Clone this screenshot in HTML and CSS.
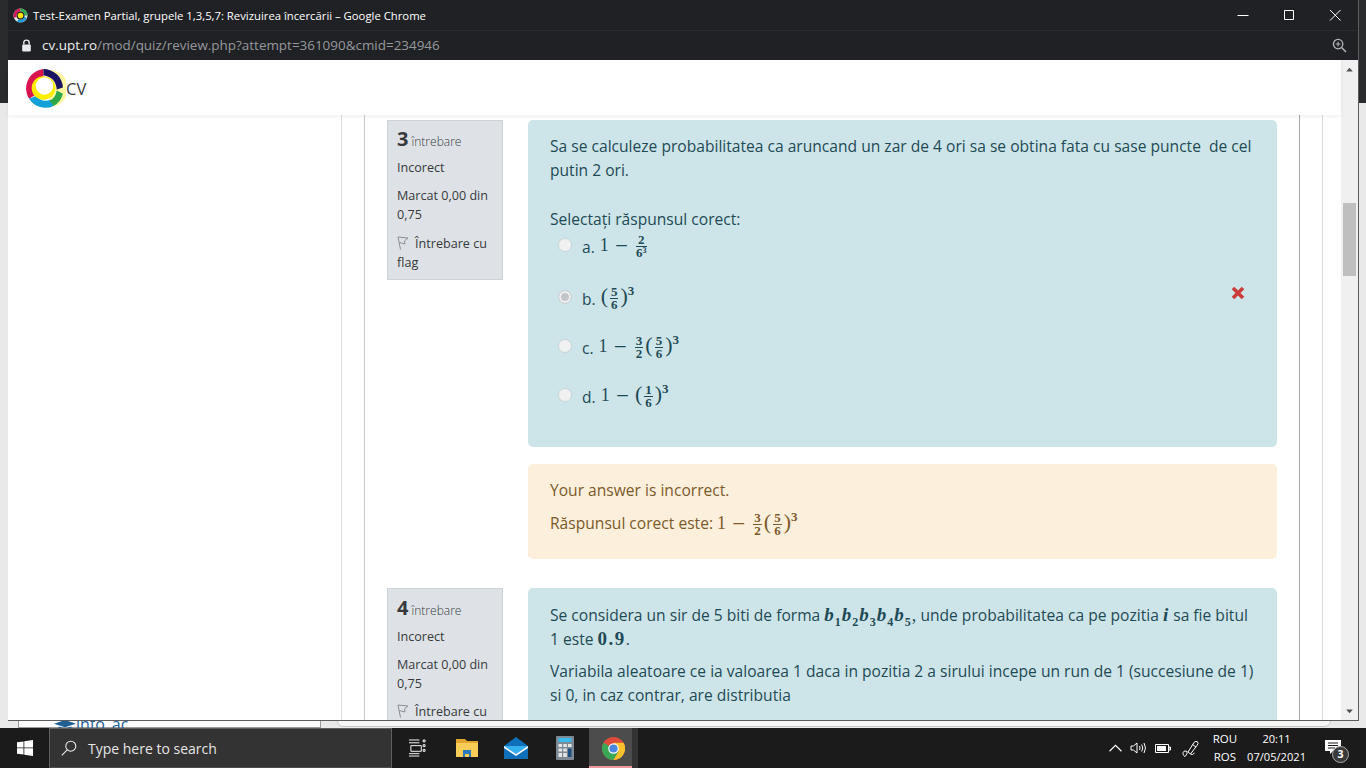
FILE: index.html
```html
<!DOCTYPE html>
<html lang="ro">
<head>
  <meta charset="UTF-8">
  <title>Test-Examen Partial, grupele 1,3,5,7: Revizuirea încercării</title>
  <link rel="stylesheet" href="styles.css">
</head>
<body>
  <div class="desktop">
    <!-- window behind the popup, only its edges show -->
    <div class="back-window">
      <div class="back-top"></div>
      <div class="back-bottom"></div>
      <div class="back-panel"><span class="back-link"><svg class="cap" viewBox="0 0 24 12"><path d="M0 4 12 0l12 4-12 4z" fill="#1f5f94"/><path d="M5 7v3q7 3 14 0V7l-7 2.400z" fill="#1f5f94"/></svg>info_ac</span></div>
      <div class="back-main"></div>
    </div>

    <div class="popup">
      <div class="titlebar">
        <svg class="favicon" viewBox="0 0 16 16"><circle cx="8" cy="8" r="6" fill="none" stroke="#e8e8e8" stroke-width="3"/><path d="M8 2a6 6 0 0 0-5.500 8" fill="none" stroke="#d4145a" stroke-width="3"/><path d="M13.500 10A6 6 0 0 1 5 13.200" fill="none" stroke="#1c9ad6" stroke-width="3"/><path d="M8 2a6 6 0 0 1 6 6" fill="none" stroke="#2fa84f" stroke-width="3"/><circle cx="8" cy="8" r="3" fill="#ffe600"/></svg>
        <span class="wintitle">Test-Examen Partial, grupele 1,3,5,7: Revizuirea încercării – Google Chrome</span>
        <div class="winbtns">
          <svg viewBox="0 0 46 30"><path d="M17.500 15.500h11" stroke="#fff" fill="none"/></svg>
          <svg viewBox="0 0 46 30"><path d="M18.500 10.500h9v9h-9z" stroke="#fff" fill="none"/></svg>
          <svg viewBox="0 0 46 30"><path d="M18 10l10.500 10.500M28.500 10 18 20.500" stroke="#fff" fill="none"/></svg>
        </div>
      </div>
      <div class="urlbar">
        <svg class="lock" viewBox="0 0 10 12"><path d="M2.500 5V3.500a2.500 2.500 0 0 1 5 0V5" fill="none" stroke="#e8eaed" stroke-width="1.300"/><rect x="1" y="5" width="8" height="6.500" rx="1" fill="#e8eaed"/></svg>
        <span class="url"><b>cv.upt.ro</b>/mod/quiz/review.php?attempt=361090&amp;cmid=234946</span>
        <svg class="zoom-ico" viewBox="0 0 16 16"><circle cx="6.500" cy="6.500" r="5" fill="none" stroke="#b4b6b9" stroke-width="1.400"/><path d="M10.200 10.200 15 15" stroke="#b4b6b9" stroke-width="1.600"/><path d="M4 6.500h5M6.500 4v5" stroke="#b4b6b9" stroke-width="1.100"/></svg>
      </div>

      <div class="viewport">
        <div class="page">
          <header class="navbar">
            <svg class="logo" viewBox="0 0 40 40">
              <path d="M24 2a18 18 0 0 1 0 36z" fill="#fff6a0"/>
              <path d="M18 1A19 19 0 0 0 4 30l8-5Q5 12 18 8z" fill="#d9144f"/>
              <path d="M4 30a19 19 0 0 0 24 7l-3-6q-9 3-14-4z" fill="#12a0d8"/>
              <path d="M28 37a19 19 0 0 0 9-12l-6-3q-1 7-7 10z" fill="#2ea84a"/>
              <path d="M18 1a19 19 0 0 1 19 18l-6 2Q30 9 18 7z" fill="#1b1464"/>
              <circle cx="18" cy="19.500" r="11.500" fill="#ffed00"/>
              <circle cx="19" cy="17.500" r="8.500" fill="#fff"/>
            </svg>
            <span class="brand">CV</span>
          </header>

          <div class="columns">
            <aside class="left-col"></aside>
            <main class="main-col">
              <section class="que">
                <div class="que-info">
                  <h3 class="que-no"><span class="num">3</span> întrebare</h3>
                  <div class="state">Incorect</div>
                  <div class="grade">Marcat 0,00 din 0,75</div>
                  <div class="flag"><svg class="flag-ico" viewBox="0 0 12 14"><path d="M1 1 11 2 7.500 5 8 8 2.400 6.500M1 1 3.500 13.500" fill="none" stroke="#8a8f94"/></svg>Întrebare cu flag</div>
                </div>
                <div class="que-body">
                  <div class="formulation q3">
                    <p class="qtext">Sa se calculeze probabilitatea ca aruncand un zar de 4 ori sa se obtina fata cu sase puncte&nbsp; de cel putin 2 ori.</p>
                    <p class="prompt">Selectați răspunsul corect:</p>
                    <div class="answers">
                      <div class="answer"><span class="radio"></span><span class="lbl">a.</span>
                        <span class="m">1 <i class="minus">−</i> <span class="frac"><span>2</span><span>6<sup>3</sup></span></span></span></div>
                      <div class="answer"><span class="radio checked"></span><span class="lbl">b.</span>
                        <span class="m"><i class="par">(</i><span class="frac"><span>5</span><span>6</span></span><i class="par">)</i><sup>3</sup></span>
                        <svg class="cross" viewBox="0 0 14 14"><path d="M2 2l10 10M12 2 2 12" stroke="#ca3c3c" stroke-width="3.600"/></svg></div>
                      <div class="answer"><span class="radio"></span><span class="lbl">c.</span>
                        <span class="m">1 <i class="minus">−</i> <span class="frac"><span>3</span><span>2</span></span><i class="par">(</i><span class="frac"><span>5</span><span>6</span></span><i class="par">)</i><sup>3</sup></span></div>
                      <div class="answer"><span class="radio"></span><span class="lbl">d.</span>
                        <span class="m">1 <i class="minus">−</i> <i class="par">(</i><span class="frac"><span>1</span><span>6</span></span><i class="par">)</i><sup>3</sup></span></div>
                    </div>
                  </div>
                  <div class="outcome">
                    <p>Your answer is incorrect.</p>
                    <p>Răspunsul corect este: <span class="m">1 <i class="minus">−</i> <span class="frac"><span>3</span><span>2</span></span><i class="par">(</i><span class="frac"><span>5</span><span>6</span></span><i class="par">)</i><sup>3</sup></span></p>
                  </div>
                </div>
              </section>

              <section class="que que-next">
                <div class="que-info">
                  <h3 class="que-no"><span class="num">4</span> întrebare</h3>
                  <div class="state">Incorect</div>
                  <div class="grade">Marcat 0,00 din 0,75</div>
                  <div class="flag"><svg class="flag-ico" viewBox="0 0 12 14"><path d="M1 1 11 2 7.500 5 8 8 2.400 6.500M1 1 3.500 13.500" fill="none" stroke="#8a8f94"/></svg>Întrebare cu flag</div>
                </div>
                <div class="que-body">
                  <div class="formulation">
                    <p class="qtext">Se considera un sir de 5 biti de forma <span class="m"><em>b</em><sub>1</sub><em>b</em><sub>2</sub><em>b</em><sub>3</sub><em>b</em><sub>4</sub><em>b</em><sub>5</sub>,</span> unde probabilitatea ca pe pozitia <span class="m"><em>i</em></span> sa fie bitul 1 este <span class="m num-lit">0.9</span>.</p>
                    <p class="qtext">Variabila aleatoare ce ia valoarea 1 daca in pozitia 2 a sirului incepe un run de 1 (succesiune de 1) si 0, in caz contrar, are distributia</p>
                  </div>
                </div>
              </section>
            </main>
            <div class="right-col"></div>
          </div>
        </div>
        <div class="scrollbar">
          <svg class="arrow" viewBox="0 0 10 6"><path d="M1 5.500 5 1l4 4.500z" fill="#505050"/></svg>
          <div class="track"><div class="thumb"></div></div>
          <svg class="arrow" viewBox="0 0 10 6"><path d="M1 .5 5 5 9 .5z" fill="#505050"/></svg>
        </div>
      </div>
    </div>
  </div>

  <footer class="taskbar">
    <svg class="start" viewBox="0 0 16 16"><path d="M0 2.300 6.500 1.400v6.100H0zM7.300 1.300 16 0v7.500H7.300zM0 8.300h6.500v6.300L0 13.700zM7.300 8.300H16V16l-8.700-1.200z" fill="#fff"/></svg>
    <div class="search">
      <svg class="search-ico" viewBox="0 0 16 16"><circle cx="9.800" cy="6.200" r="5" fill="none" stroke="#e8e8e8" stroke-width="1.100"/><path d="M6.200 9.800.8 15.400" stroke="#e8e8e8" stroke-width="1.100"/></svg>
      <span>Type here to search</span>
    </div>
    <div class="task-icons">
      <div class="task"><svg class="tv" viewBox="0 0 18 18"><path d="M0 .5h11M0 3.500h11M2 6.500h11v6H2zM0 15h11M0 17.500h11M15 .5h2v2h-2zM15 5.500h2v2h-2zM15 10.500h2v2h-2z" fill="none" stroke="#fff"/></svg></div>
      <div class="task"><svg class="ti" viewBox="0 0 24 24"><path d="M1 3h9l2 2h11v16H1z" fill="#e2a52d"/><path d="M1 7h22v14H1z" fill="#f7cd58"/><path d="M8 21v-7h8v7h-2v-3h-4v3z" fill="#2b79b9"/></svg></div>
      <div class="task"><svg class="ti" viewBox="0 0 24 24"><path d="M12 1 24 10v13H0V10z" fill="#0f6fb8"/><path d="M0 10h24L12 18z" fill="#35b0ef"/><path d="M0 10l12 8 12-8v2L12 20 0 12z" fill="#fff"/></svg></div>
      <div class="task"><svg class="ti" viewBox="0 0 24 24"><rect x="3" y="0" width="18" height="24" rx="1" fill="#7d8a94"/><rect x="5.500" y="2" width="13" height="4" fill="#3bb9ea"/><path d="M5.500 8h3.500v3H5.500zM10.300 8h3.500v3h-3.500zM15 8h3.500v3H15zM5.500 12.500h3.500v3H5.500zM10.300 12.500h3.500v3h-3.500zM5.500 17h3.500v4H5.500zM10.300 17h3.500v4h-3.500z" fill="#e6e6e6"/><path d="M15 12.500h3.500v8.500H15z" fill="#1c4f80"/></svg></div>
      <div class="task active"><svg class="ti chrome" viewBox="0 0 24 24"><circle cx="12" cy="12" r="12" fill="#dd4b3a"/><path d="M12 12 1.600 6A12 12 0 0 0 12 24l5.200-9z" fill="#3aa757"/><path d="M12 6h10.500A12 12 0 0 1 12 24l5.200-9z" fill="#fbc02d"/><circle cx="12" cy="12" r="5.500" fill="#fff"/><circle cx="12" cy="12" r="4.300" fill="#4a86e0"/></svg></div>
    </div>
    <div class="tray">
      <svg class="tray-ico up" viewBox="0 0 12 7"><path d="M.5 6.500 6 1l5.500 5.500" fill="none" stroke="#fff"/></svg>
      <svg class="tray-ico vol" viewBox="0 0 17 14"><path d="M1 5h2.500L7 2v10L3.500 9H1zM9.500 5q1.200 2 0 4M11.700 3.500q2.200 3.500 0 7M14 2q3 5 0 10" fill="none" stroke="#fff"/></svg>
      <svg class="tray-ico bat" viewBox="0 0 16 9"><path d="M.5 .5h13v8H.5zM14 3h1.500v3H14z" fill="none" stroke="#fff"/><path d="M2 2h9v5H2z" fill="#fff"/></svg>
      <svg class="tray-ico pen" viewBox="0 0 17 17"><path d="M6 12 12 2.500Q14 .5 15.500 1.800T15 5.500L8.500 14zM10.500 4.500l3.500 2.500M1.500 15.500Q0 11.500 3 11t2 2.500-3 3M8.500 14q2 1.500 4-1" fill="none" stroke="#fff"/></svg>
      <div class="lang"><span>ROU</span><span>ROS</span></div>
      <div class="clock"><span>20:11</span><span>07/05/2021</span></div>
      <div class="notif">
        <svg viewBox="0 0 16 15"><path d="M0 0h16v11H8l-3 3v-3H0z" fill="#fff"/><path d="M3 3h10M3 5.500h10M3 8h7" stroke="#1b1b1b"/></svg>
        <span class="notif-count">3</span>
      </div>
    </div>
  </footer>
</body>
</html>
```

FILE: styles.css
```css
* {
  box-sizing: border-box;
}
html, body {
  margin: 0;
  height: 100%;
  overflow: hidden;
}
body {
  width: 1366px;
  height: 768px;
  font-family: "Open Sans", sans-serif;
  background: #1b1b1b;
}
svg {
  display: block;
  flex: none;
}

/* desktop and its windows */
.desktop {
  position: relative;
  height: 728px;
  overflow: hidden;
  background: #e9e9e9;
}
.back-window {
  position: absolute;
  inset: 0;
}
.back-top {
  height: 103px;
  background: #2a2b2d;
}
.back-bottom {
  height: 625px;
  background: #e9e9e9;
}
.back-panel {
  position: absolute;
  left: 18px;
  top: 600px;
  width: 303px;
  height: 128px;
  background: #fbfbfb;
  border: 1px solid #9a9a9a;
}
.back-main {
  position: absolute;
  left: 337px;
  top: 600px;
  width: 994px;
  height: 127px;
  background: #f6f6f6;
  border: 1px solid #c8c8c8;
  border-radius: 0 0 6px 6px;
}
.back-link {
  position: absolute;
  left: 35px;
  top: 112px;
  padding-left: 22px;
  font-size: 16px;
  line-height: 22px;
  color: #1f5f94;
}
.cap {
  position: absolute;
  left: 0;
  top: 7px;
  width: 22px;
  height: 11px;
}
.popup {
  position: absolute;
  left: 8px;
  top: 0;
  width: 1350px;
  height: 721px;
  display: flex;
  flex-direction: column;
  border-bottom: 1px solid #5c5c5c;
  box-shadow: 1px 0 0 #5c5c5c;
}

/* chrome */
.titlebar {
  height: 30px;
  background: #202124;
  color: #fff;
  display: flex;
  align-items: center;
  padding-left: 5px;
  font-size: 11.300px;
}
.favicon {
  width: 15px;
  height: 15px;
  margin-right: 5px;
}
.wintitle {
  flex: 1;
  white-space: nowrap;
}
.winbtns {
  display: flex;
}
.winbtns svg {
  width: 46px;
  height: 30px;
}
.urlbar {
  height: 30px;
  background: #202124;
  border-top: 1px solid #2a2b2e;
  display: flex;
  align-items: center;
  padding: 0 11px 2px 13px;
}
.lock {
  width: 11px;
  height: 13px;
  margin-top: 2px;
}
.url {
  flex: 1;
  margin-left: 10px;
  font-size: 13.440px;
  color: #96989c;
  white-space: nowrap;
}
.url b {
  font-weight: 400;
  color: #eceef0;
}
.zoom-ico {
  width: 15px;
  height: 15px;
  margin-top: 2px;
}
.viewport {
  flex: 1;
  min-height: 0;
  display: flex;
  background: #fff;
}
.page {
  flex: 1;
  min-width: 0;
  display: flex;
  flex-direction: column;
}
.navbar {
  height: 55px;
  flex: none;
  display: flex;
  align-items: center;
  padding-left: 17px;
  box-shadow: 0 2px 4px rgba(0,0,0,.06);
  position: relative;
  z-index: 1;
  background: #fff;
}
.logo {
  width: 41px;
  height: 41px;
  margin-top: 1px;
}
.brand {
  font-size: 16.500px;
  color: #373a3c;
  margin-top: 2px;
}
.scrollbar {
  width: 17px;
  background: #f0f0f0;
  display: flex;
  flex-direction: column;
  align-items: center;
  padding: 7px 0 6px;
}
.arrow {
  width: 9px;
  height: 5px;
  flex: none;
}
.track {
  flex: 1;
  width: 100%;
  padding-top: 131px;
}
.thumb {
  height: 73px;
  margin: 0 2px;
  background: #bfbfbf;
}

/* course layout */
.columns {
  flex: 1;
  min-height: 0;
  overflow: hidden;
  display: flex;
  font-size: 15.600px;
  line-height: 24px;
  color: #373a3c;
}
.left-col {
  flex: none;
  width: 334px;
  border-right: 1px solid #dfdfdf;
}
.main-col {
  flex: none;
  width: 936px;
  margin-left: 22px;
  padding: 5px 22px 0;
  border-left: 1px solid #c9c9c9;
  border-right: 1px solid #a8a8a8;
}
.right-col {
  flex: none;
  width: 23px;
  border-right: 1px solid #dcdcdc;
}

/* question */
.que {
  display: flex;
  align-items: flex-start;
  margin-bottom: 29px;
}
.que-info {
  width: 116px;
  flex: none;
  margin-right: 25px;
  padding: 6px 9px 7px;
  background: #dee2e6;
  border: 1px solid #cfd3d7;
  font-size: 12.600px;
  line-height: 19px;
  color: #373a3c;
}
.que-no {
  margin: 0 0 4px;
  font-size: 12px;
  font-weight: 300;
  line-height: 24px;
}
.num {
  font-size: 20px;
  font-weight: 700;
}
.state {
  margin-bottom: 9px;
}
.grade {
  margin-bottom: 10px;
}
.que-next .que-info {
  padding-top: 7px;
}
.que-next .grade {
  margin-bottom: 9px;
}
.que-next .formulation {
  padding-top: 15px;
}
.flag-ico {
  display: inline-block;
  width: 12px;
  height: 14px;
  margin-right: 6px;
  vertical-align: -2px;
}
.que-body {
  width: 749px;
  flex: none;
}
.formulation {
  background: #cde5e9;
  color: #1f4a55;
  border-radius: 5px;
  padding: 14px 22px;
}
.formulation.q3 {
  height: 327px;
}
.qtext {
  margin: 0 0 8px;
}
.prompt {
  margin: 25px 0 0;
}
.answers {
  margin-top: -6px;
}
.answer {
  position: relative;
  height: 49px;
  display: flex;
  align-items: center;
  padding-left: 8px;
}
.answer:first-child {
  height: 43px;
  margin-bottom: 6px;
}
.radio {
  width: 14px;
  height: 14px;
  border-radius: 50%;
  background: #f1f1f1;
  border: 1px solid #c9d3d5;
  margin-right: 10px;
  margin-top: -4px;
}
.radio.checked {
  background: #c2c6c8;
  box-shadow: inset 0 0 0 2px #f1f1f1;
}
.lbl {
  margin-right: 5px;
}
.cross {
  position: absolute;
  left: 681px;
  top: 12px;
  width: 14px;
  height: 14px;
}

/* maths */
.m {
  font-family: "Liberation Serif", serif;
  font-size: 18px;
  font-weight: 400;
  line-height: 1;
  white-space: nowrap;
}
.m em {
  font-size: 19px;
  font-weight: 700;
  margin-right: 1px;
}
.m sub {
  font-size: 12px;
  font-weight: 700;
  line-height: 0;
  margin-right: 1px;
}
.m sup {
  font-size: 13px;
  font-weight: 700;
  line-height: 0;
  vertical-align: 8px;
}
.num-lit {
  font-size: 19px;
  font-weight: 700;
  letter-spacing: 1.500px;
}
.minus {
  font-family: "DejaVu Serif", serif;
  font-style: normal;
  font-size: 17px;
  font-weight: 400;
  line-height: 0;
  margin: 0 1px;
}
.par {
  font-style: normal;
  font-size: 22px;
  font-weight: 400;
  line-height: 0;
}
.frac {
  display: inline-flex;
  flex-direction: column;
  align-items: center;
  vertical-align: middle;
  font-size: 13px;
  font-weight: 700;
  line-height: 12px;
  margin: 0 2px;
}
.frac span:first-child {
  border-bottom: 1px solid currentColor;
  padding: 0 1px;
  align-self: stretch;
  text-align: center;
}
.frac sup {
  font-size: 8px;
  vertical-align: 4px;
}
.outcome {
  margin-top: 17px;
  height: 95px;
  background: #fcefdc;
  color: #7d5a29;
  border-radius: 5px;
  padding: 14px 22px;
}
.outcome p {
  margin: 0 0 9px;
}

/* taskbar */
.taskbar {
  height: 40px;
  background: #1b1b1b;
  display: flex;
  align-items: center;
  color: #fff;
}
.start {
  width: 16px;
  height: 16px;
  margin: 0 16px 0 17px;
}
.search {
  width: 343px;
  height: 40px;
  background: #333;
  border: 1px solid #5f5f5f;
  border-bottom-color: #4d4d4d;
  display: flex;
  align-items: center;
  padding-left: 11px;
  font-size: 14px;
  color: #e6e6e6;
}
.search-ico {
  width: 16px;
  height: 16px;
  margin-right: 11px;
}
.task-icons {
  display: flex;
  margin-left: 1px;
}
.task {
  width: 49px;
  height: 40px;
  display: flex;
  align-items: center;
  justify-content: center;
}
.task.active {
  background:
    linear-gradient(#f09aa0, #f09aa0) 0 100% / 43px 2px no-repeat,
    linear-gradient(to right, #4c4c4c 43px, #333 43px);
}
.ti {
  width: 24px;
  height: 24px;
}
.ti.chrome {
  width: 23px;
  height: 23px;
}
.tv {
  width: 17px;
  height: 18px;
}
.tray {
  margin-left: auto;
  display: flex;
  align-items: center;
  height: 40px;
  padding-right: 19px;
}
.up {
  width: 13px;
  height: 8px;
  margin-right: 8px;
}
.vol {
  width: 17px;
  height: 14px;
  margin-right: 8px;
}
.bat {
  width: 16px;
  height: 9px;
  margin-right: 11px;
}
.pen {
  width: 17px;
  height: 17px;
  margin-right: 14px;
}
.lang, .clock {
  display: flex;
  flex-direction: column;
  align-items: center;
  line-height: 18px;
}
.lang {
  font-size: 11.500px;
}
.clock {
  font-size: 11.100px;
  margin-left: 10px;
}
.notif {
  position: relative;
  width: 22px;
  height: 24px;
  margin: 8px 0 0 19px;
}
.notif svg {
  width: 16px;
  height: 15px;
}
.notif-count {
  position: absolute;
  left: 7px;
  top: 6px;
  width: 17px;
  height: 17px;
  border-radius: 50%;
  background: #3a3a3a;
  border: 1px solid #aaa;
  font-size: 10.500px;
  line-height: 15px;
  text-align: center;
  font-weight: 700;
}
```
